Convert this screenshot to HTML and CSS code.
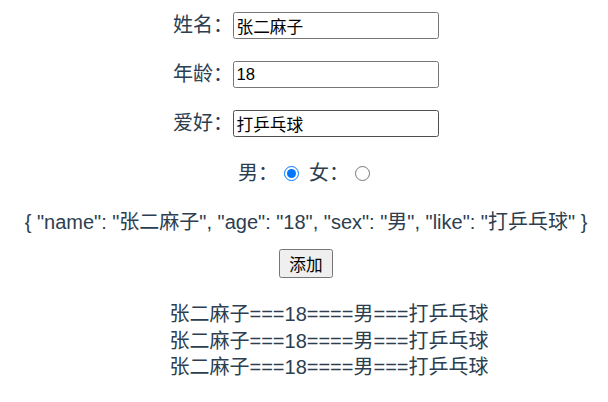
FILE: index.html
```html
<!DOCTYPE html>
<html lang="zh-CN">
<head>
<meta charset="utf-8">
<title>表单</title>
<link rel="stylesheet" href="styles.css">
</head>
<body>
<div class="app">
  <div class="row"><span class="lbl">姓名：</span><input class="field" type="text" value="张二麻子"></div>
  <div class="row"><span class="lbl">年龄：</span><input class="field" type="text" value="18"></div>
  <div class="row"><span class="lbl">爱好：</span><input class="field field-hover" type="text" value="打乒乓球"></div>
  <div class="row radios"><span class="lbl">男：</span><input class="radio" type="radio" name="sex" checked><span class="lbl lbl-second">女：</span><input class="radio" type="radio" name="sex"></div>
  <p class="json">{ "name": "张二麻子", "age": "18", "sex": "男", "like": "打乒乓球" }</p>
  <div class="btn-row"><button class="btn" type="button">添加</button></div>
  <ul class="list">
    <li>张二麻子===18====男===打乒乓球</li>
    <li>张二麻子===18====男===打乒乓球</li>
    <li>张二麻子===18====男===打乒乓球</li>
  </ul>
</div>
</body>
</html>
```

FILE: styles.css
```css
html, body {
  margin: 0;
  padding: 0;
  background: #ffffff;
}

.app {
  font-family: "Liberation Sans", "Noto Sans CJK SC", sans-serif;
  font-size: 20px;
  color: #2c3e50;
  text-align: center;
  padding-top: 12px;
  padding-left: 4px;
}

.row {
  display: flex;
  justify-content: center;
  align-items: center;
  height: 27px;
  margin-bottom: 22px;
}

.lbl {
  line-height: 27px;
  white-space: nowrap;
}

.field {
  box-sizing: border-box;
  width: 206px;
  height: 27px;
  margin: 0;
  padding: 0 2.5px;
  border: 1px solid #767676;
  border-radius: 2.5px;
  font-family: "Liberation Sans", "Noto Sans CJK SC", sans-serif;
  font-size: 16.67px;
  color: #000000;
  background: #ffffff;
  outline: none;
}

.field-hover {
  border-color: #4f4f4f;
}

.radios {
  height: 28px;
  margin-top: 17px;
  margin-bottom: 0;
}

.radio {
  width: 15px;
  height: 15px;
  margin: 0 4px 0 6px;
  accent-color: #0075ff;
}

.lbl-second {
  margin-left: 6px;
}

.json {
  margin: 21px 0 0;
  height: 28px;
  line-height: 28px;
  white-space: nowrap;
}

.btn-row {
  margin-top: 13px;
  height: 29px;
}

.btn {
  box-sizing: border-box;
  width: 54px;
  height: 29px;
  margin: 0;
  padding: 0;
  border: 1px solid #767676;
  border-radius: 2.5px;
  background: #efefef;
  color: #000000;
  font-family: "Liberation Sans", "Noto Sans CJK SC", sans-serif;
  font-size: 16.67px;
}

.list {
  list-style: none;
  margin: 23px 0 0;
  padding: 0 0 0 46px;
  line-height: 26.5px;
}
```
